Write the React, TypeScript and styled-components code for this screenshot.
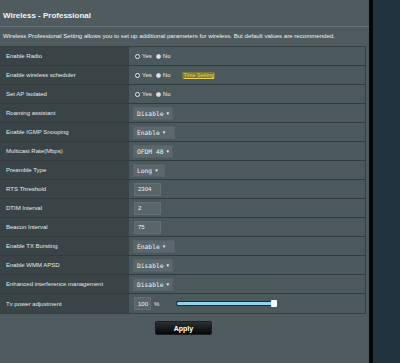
import React from "react"
import styled, { createGlobalStyle } from "styled-components"

const GlobalStyle = createGlobalStyle`
	html, body {
		margin: 0;
		padding: 0;
		background: #22343f;
	}
	body {
		font-family: "Liberation Sans", Arial, sans-serif;
	}
`

type Control =
	| { kind: "radio"; value: "yes" | "no"; link?: string }
	| { kind: "select"; value: string; width: number }
	| { kind: "input"; value: string }
	| { kind: "power"; value: number }

type Setting = {
	label: string
	control: Control
}

const SETTINGS: Array<Setting> = [
	{ label: "Enable Radio", control: { kind: "radio", value: "yes" } },
	{
		label: "Enable wireless scheduler",
		control: { kind: "radio", value: "yes", link: "Time Setting" }
	},
	{ label: "Set AP Isolated", control: { kind: "radio", value: "yes" } },
	{ label: "Roaming assistant", control: { kind: "select", value: "Disable", width: 40 } },
	{ label: "Enable IGMP Snooping", control: { kind: "select", value: "Enable", width: 42 } },
	{ label: "Multicast Rate(Mbps)", control: { kind: "select", value: "OFDM 48", width: 40 } },
	{ label: "Preamble Type", control: { kind: "select", value: "Long", width: 32 } },
	{ label: "RTS Threshold", control: { kind: "input", value: "2304" } },
	{ label: "DTIM Interval", control: { kind: "input", value: "2" } },
	{ label: "Beacon Interval", control: { kind: "input", value: "75" } },
	{ label: "Enable TX Bursting", control: { kind: "select", value: "Enable", width: 42 } },
	{ label: "Enable WMM APSD", control: { kind: "select", value: "Disable", width: 40 } },
	{
		label: "Enhanced interference management",
		control: { kind: "select", value: "Disable", width: 40 }
	},
	{ label: "Tx power adjustment", control: { kind: "power", value: 100 } }
]

export default function App() {
	return (
		<>
			<GlobalStyle />
			<Page>
				<Panel>
					<Title>Wireless - Professional</Title>
					<Description>
						Wireless Professional Setting allows you to set up additional parameters
						for wireless. But default values are recommended.
					</Description>
					<Table>
						{SETTINGS.map(setting => (
							<Row key={setting.label}>
								<Label>{setting.label}</Label>
								<Value>
									<SettingControl control={setting.control} />
								</Value>
							</Row>
						))}
					</Table>
					<ButtonBar>
						<ApplyButton>Apply</ApplyButton>
					</ButtonBar>
				</Panel>
				<Separator />
				<Side />
			</Page>
		</>
	)
}

function SettingControl({ control }: { control: Control }) {
	switch (control.kind) {
		case "radio":
			return (
				<>
					<RadioOption>
						<RadioDot checked={control.value === "yes"} />
						Yes
					</RadioOption>
					<RadioOption>
						<RadioDot checked={control.value === "no"} />
						No
					</RadioOption>
					{control.link && <Link>{control.link}</Link>}
				</>
			)
		case "select":
			return (
				<Select $width={control.width}>
					<span>{control.value}</span>
					<Caret>▾</Caret>
				</Select>
			)
		case "input":
			return <TextBox>{control.value}</TextBox>
		case "power":
			return (
				<>
					<SmallBox>{control.value}</SmallBox>
					<Percent>%</Percent>
					<Slider>
						<Track style={{ width: `${control.value}%` }} />
						<Thumb />
					</Slider>
				</>
			)
	}
}

const Page = styled.div`
	display: flex;
	width: 400px;
	height: 363px;
	overflow: hidden;
`

const Panel = styled.div`
	width: 369px;
	background: #4f5b5f;
	display: flex;
	flex-direction: column;
`

const Separator = styled.div`
	width: 4px;
	background: #050708;
`

const Side = styled.div`
	flex: 1;
	background: #21333e;
`

const Title = styled.div`
	height: 27px;
	box-sizing: border-box;
	padding: 11px 0 0 3px;
	font-size: 8px;
	font-weight: bold;
	color: #f2f4f4;
	border-bottom: 1px solid #667275;
`

const Description = styled.div`
	padding: 5px 0 0 3px;
	height: 19px;
	box-sizing: border-box;
	font-size: 6.1px;
	color: #eef1f2;
	white-space: nowrap;
`

const Table = styled.div`
	width: 366px;
	border: 1px solid #36403f;
	border-left: none;
	box-sizing: border-box;
	display: flex;
	flex-direction: column;
`

const Row = styled.div`
	display: grid;
	grid-template-columns: 129px 1fr;
	height: 19px;
	border-bottom: 1px solid #323b3e;
	box-sizing: border-box;
	&:last-child {
		border-bottom: none;
	}
`

const Label = styled.div`
	background: #3a4447;
	color: #e4e8e9;
	font-size: 6px;
	padding-left: 6px;
	display: flex;
	align-items: center;
`

const Value = styled.div`
	background: #4b585c;
	display: flex;
	align-items: center;
	padding-left: 6px;
	color: #e8ecec;
	font-size: 6px;
`

const RadioOption = styled.span`
	display: inline-flex;
	align-items: center;
	gap: 2px;
	margin-right: 4px;
	font-size: 6px;
`

const RadioDot = styled.span<{ checked: boolean }>`
	width: 5px;
	height: 5px;
	border-radius: 50%;
	box-sizing: border-box;
	background: ${p => (p.checked ? "#3e4a4d" : "#dfe5e6")};
	border: ${p => (p.checked ? "1.5px solid #e8eeef" : "1px solid #c9d1d3")};
`

const Link = styled.span`
	margin-left: 8px;
	background: #7a7a3a;
	color: #e6d55a;
	font-size: 5.5px;
	text-decoration: underline;
	padding: 0 1px;
`

const Select = styled.span<{ $width: number }>`
	width: ${p => p.$width}px;
	height: 13px;
	box-sizing: border-box;
	background: #5a676b;
	border: 1px solid #55626a;
	display: flex;
	align-items: center;
	padding-left: 3px;
	gap: 3px;
	font-family: "DejaVu Sans Mono", "Liberation Mono", monospace;
	font-size: 6.3px;
	color: #eef2f2;
	margin-left: -2px;
`

const Caret = styled.span`
	font-size: 5px;
	font-family: "DejaVu Sans", sans-serif;
`

const TextBox = styled.span`
	width: 27px;
	height: 13px;
	box-sizing: border-box;
	background: #58656a;
	border: 1px solid #627075;
	display: flex;
	align-items: center;
	padding-left: 3px;
	font-size: 6px;
	color: #f2f4f4;
	margin-left: -1px;
`

const SmallBox = styled(TextBox)`
	width: 17px;
`

const Percent = styled.span`
	margin-left: 3px;
	font-size: 6px;
`

const Slider = styled.span`
	position: relative;
	margin-left: 17px;
	width: 99px;
	height: 5px;
	border-radius: 2px;
	background: #1b2a30;
	border: 1px solid #1c2a31;
	box-sizing: border-box;
`

const Track = styled.span`
	display: block;
	height: 100%;
	border-radius: 2px;
	background: #8fd4ee;
`

const Thumb = styled.span`
	position: absolute;
	right: -3px;
	top: -2px;
	width: 6px;
	height: 7px;
	border-radius: 1px;
	background: #f4f8fa;
`

const ButtonBar = styled.div`
	display: flex;
	padding: 7px 0 0 155px;
`

const ApplyButton = styled.div`
	width: 57px;
	height: 14px;
	border-radius: 2px;
	background: linear-gradient(#2a3033, #050708);
	border: 1px solid #1a1f22;
	box-sizing: border-box;
	color: #ffffff;
	font-size: 7px;
	font-weight: bold;
	display: flex;
	align-items: center;
	justify-content: center;
`
